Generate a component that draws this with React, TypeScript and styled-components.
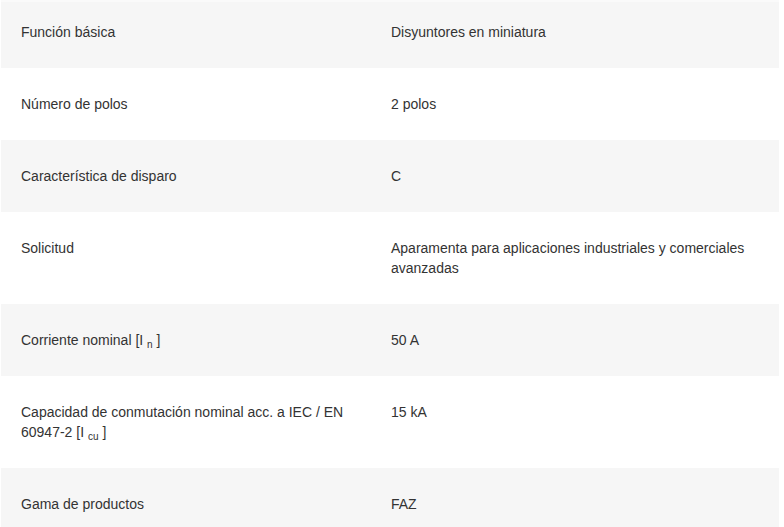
import React from "react";
import styled, { createGlobalStyle } from "styled-components";

const Global = createGlobalStyle`
  html, body { margin: 0; padding: 0; background: #ffffff; }
  body { font-family: "Liberation Sans", Arial, sans-serif; }
`;

const Table = styled.div`
  width: 778px;
  margin-left: 1px;
  border-top: 2px solid #fafafa;
  display: flex;
  flex-direction: column;
`;

const Row = styled.div<{ $shaded: boolean; $first?: boolean }>`
  display: grid;
  grid-template-columns: 370px 1fr;
  background: ${(p) => (p.$shaded ? "#f6f6f6" : "#ffffff")};
  padding: ${(p) => (p.$first ? "20px" : "26px")} 20px 26px 20px;
  font-size: 14px;
  line-height: 20px;
  color: #333333;
`;

const Label = styled.div`
  padding-right: 24px;
`;

const Value = styled.div`
  padding-right: 4px;
`;

const Sub = styled.sub`
  font-size: 10px;
  line-height: 0;
  vertical-align: -3px;
`;

type Item = { label: React.ReactNode; value: React.ReactNode };

const items: Item[] = [
  { label: "Función básica", value: "Disyuntores en miniatura" },
  { label: "Número de polos", value: "2 polos" },
  { label: "Característica de disparo", value: "C" },
  {
    label: "Solicitud",
    value: "Aparamenta para aplicaciones industriales y comerciales avanzadas",
  },
  {
    label: (
      <>
        Corriente nominal [I <Sub>n</Sub> ]
      </>
    ),
    value: "50 A",
  },
  {
    label: (
      <>
        Capacidad de conmutación nominal acc. a IEC / EN 60947-2 [I <Sub>cu</Sub> ]
      </>
    ),
    value: "15 kA",
  },
  { label: "Gama de productos", value: "FAZ" },
];

export default function App() {
  return (
    <>
      <Global />
      <Table>
        {items.map((it, i) => (
          <Row key={i} $shaded={i % 2 === 0} $first={i === 0}>
            <Label>{it.label}</Label>
            <Value>{it.value}</Value>
          </Row>
        ))}
      </Table>
    </>
  );
}
